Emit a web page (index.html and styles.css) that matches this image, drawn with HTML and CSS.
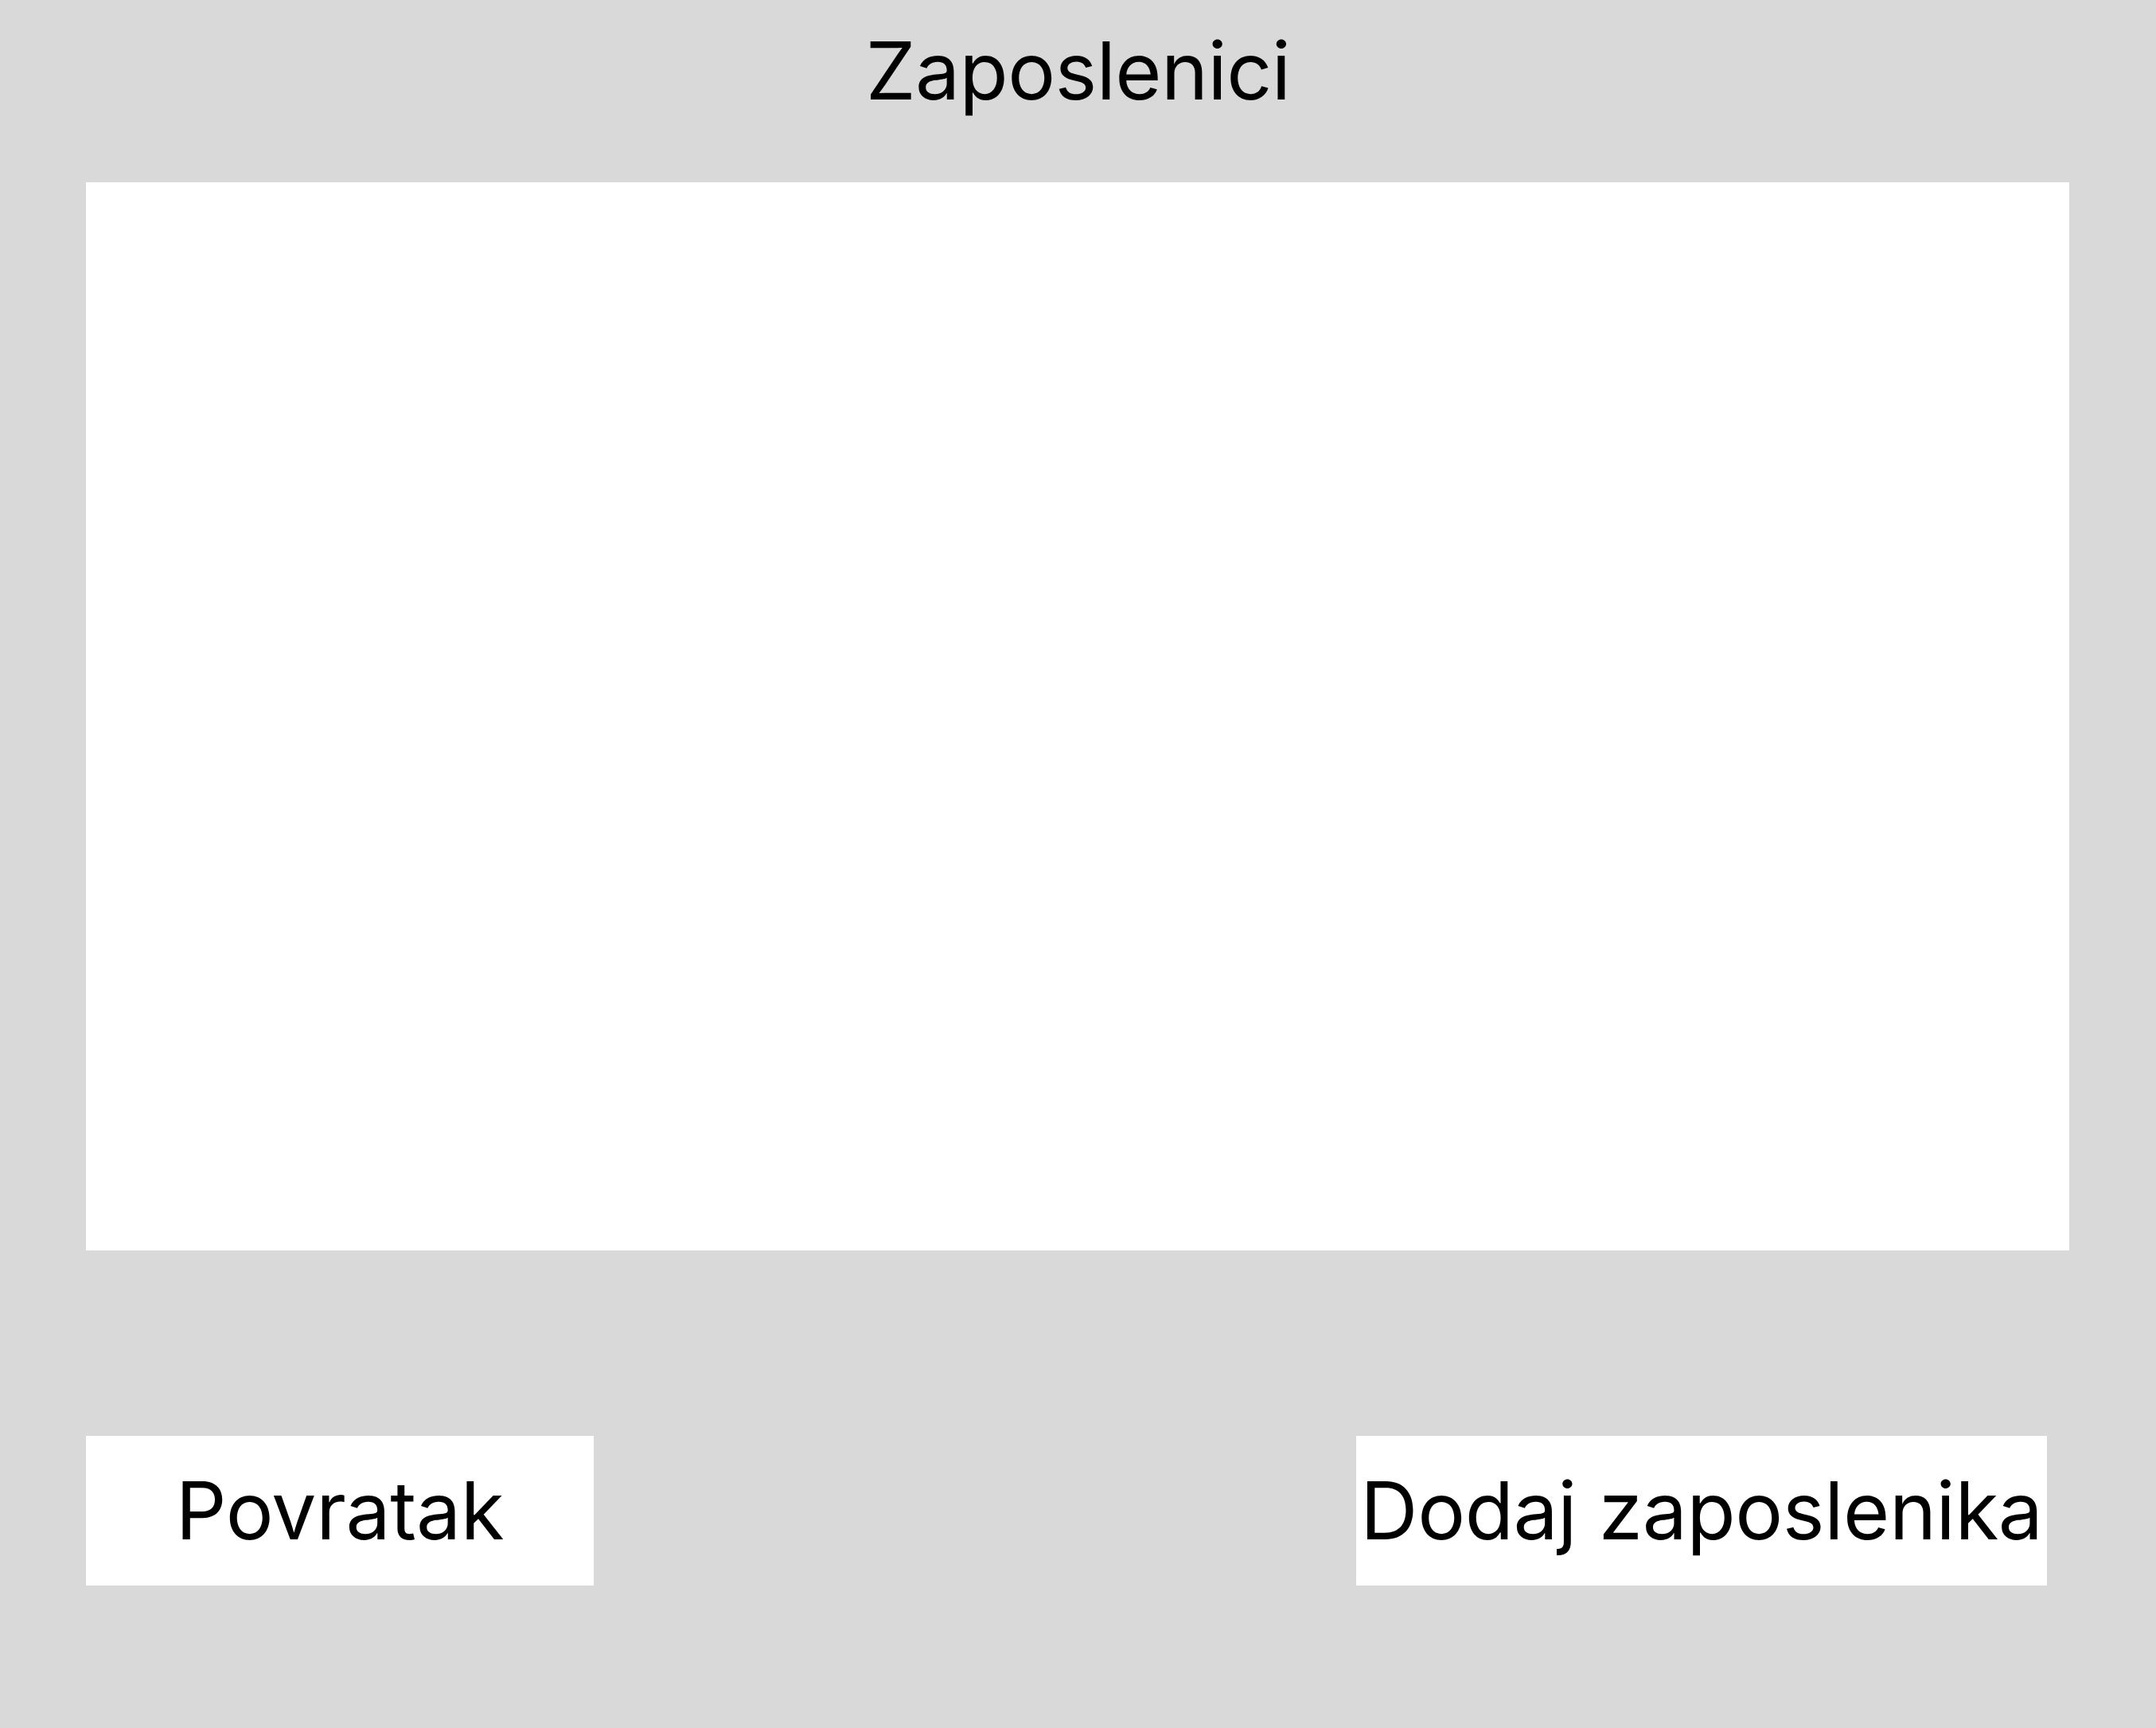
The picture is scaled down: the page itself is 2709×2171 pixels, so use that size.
FILE: index.html
```html
<!DOCTYPE html>
<html lang="hr">
<head>
<meta charset="utf-8">
<title>Zaposlenici</title>
<link rel="stylesheet" href="styles.css">
</head>
<body>
<div class="page">
  <header class="header">
    <h1 class="title">Zaposlenici</h1>
  </header>
  <main class="list"></main>
  <div class="actions">
    <button class="btn btn-back">Povratak</button>
    <button class="btn btn-add">Dodaj zaposlenika</button>
  </div>
</div>
</body>
</html>
```
FILE: styles.css
```css
html, body {
  margin: 0;
  padding: 0;
}
body {
  background: #d9d9d9;
  font-family: Inter, "Noto Sans", sans-serif;
  color: #000;
}
.page {
  width: 2709px;
  height: 2171px;
  display: flex;
  flex-direction: column;
}
.header {
  padding-top: 39px;
  height: 229px;
  box-sizing: border-box;
}
.title {
  margin: 0;
  font-size: 100px;
  line-height: 100px;
  font-weight: 400;
  letter-spacing: -0.6px;
  text-align: center;
}
.list {
  margin: 0 109px 0 108px;
  height: 1342px;
  background: #fff;
}
.actions {
  margin-top: 233px;
  padding: 0 137px 0 108px;
  display: flex;
  justify-content: space-between;
}
.btn {
  height: 188px;
  background: #fff;
  border: none;
  padding: 0;
  font-family: Inter, "Noto Sans", sans-serif;
  font-size: 100px;
  line-height: 100px;
  letter-spacing: -0.4px;
  color: #000;
  display: flex;
  align-items: center;
  justify-content: center;
}
.btn-back {
  width: 638px;
}
.btn-add {
  width: 868px;
}
```
